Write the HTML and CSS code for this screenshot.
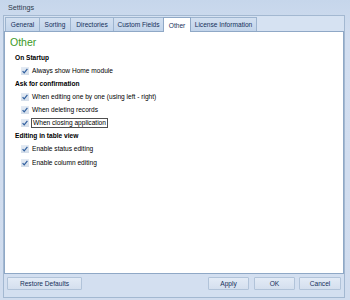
FILE: index.html
```html
<!DOCTYPE html>
<html>
<head>
<meta charset="utf-8">
<link rel="stylesheet" href="styles.css">
</head>
<body>
<div class="window">
  <div class="titlebar">Settings</div>
  <div class="frame">
    <div class="tabstrip">
      <div class="tab w-general">General</div>
      <div class="tab w-sorting">Sorting</div>
      <div class="tab w-dirs">Directories</div>
      <div class="tab w-custom">Custom Fields</div>
      <div class="tab active w-other">Other</div>
      <div class="tab w-license">License Information</div>
    </div>
    <div class="panel">
      <div class="title">Other</div>
      <div class="heading">On Startup</div>
      <div class="row"><span class="cb"><svg viewBox="0 0 8 8" width="8" height="8"><path d="M1.6 4.2 L3.2 5.9 L6.4 1.9" fill="none" stroke="#2f5e9e" stroke-width="1.2"/></svg></span><span class="lbl">Always show Home module</span></div>
      <div class="heading">Ask for confirmation</div>
      <div class="row"><span class="cb"><svg viewBox="0 0 8 8" width="8" height="8"><path d="M1.6 4.2 L3.2 5.9 L6.4 1.9" fill="none" stroke="#2f5e9e" stroke-width="1.2"/></svg></span><span class="lbl">When editing one by one (using left - right)</span></div>
      <div class="row"><span class="cb"><svg viewBox="0 0 8 8" width="8" height="8"><path d="M1.6 4.2 L3.2 5.9 L6.4 1.9" fill="none" stroke="#2f5e9e" stroke-width="1.2"/></svg></span><span class="lbl">When deleting records</span></div>
      <div class="row"><span class="cb"><svg viewBox="0 0 8 8" width="8" height="8"><path d="M1.6 4.2 L3.2 5.9 L6.4 1.9" fill="none" stroke="#2f5e9e" stroke-width="1.2"/></svg></span><span class="lbl focus">When closing application</span></div>
      <div class="heading">Editing in table view</div>
      <div class="row tall"><span class="cb"><svg viewBox="0 0 8 8" width="8" height="8"><path d="M1.6 4.2 L3.2 5.9 L6.4 1.9" fill="none" stroke="#2f5e9e" stroke-width="1.2"/></svg></span><span class="lbl">Enable status editing</span></div>
      <div class="row tall"><span class="cb"><svg viewBox="0 0 8 8" width="8" height="8"><path d="M1.6 4.2 L3.2 5.9 L6.4 1.9" fill="none" stroke="#2f5e9e" stroke-width="1.2"/></svg></span><span class="lbl">Enable column editing</span></div>
    </div>
    <div class="footer">
      <div class="btn w-restore">Restore Defaults</div>
      <div class="spacer"></div>
      <div class="btn w-apply">Apply</div>
      <div class="btn w-ok">OK</div>
      <div class="btn w-cancel">Cancel</div>
    </div>
  </div>
</div>
</body>
</html>
```
FILE: styles.css
```css
* { box-sizing: border-box; }
html, body { margin: 0; padding: 0; }
body {
  width: 350px;
  height: 300px;
  overflow: hidden;
  background: #cfdcee;
  font-family: "Liberation Sans", Arial, sans-serif;
  font-size: 6.6px;
  color: #000;
}
.window {
  width: 350px;
  height: 300px;
  padding: 0 5px 2px 3px;
  display: flex;
  flex-direction: column;
  background: linear-gradient(#c6d6eb, #d2def0 40px, #d0dcee);
}
.titlebar {
  height: 15px;
  line-height: 15px;
  padding-left: 5px;
  font-size: 7.2px;
  color: #2e3a4a;
}
.frame {
  flex: 1;
  display: flex;
  flex-direction: column;
  border: 1px solid #a3b8d1;
  background: #d3dff0;
}
.tabstrip {
  height: 15px;
  display: flex;
  align-items: flex-end;
  padding-left: 1px;
  background: #d6e2f2;
}
.tab {
  height: 14px;
  line-height: 13px;
  text-align: center;
  color: #15305a;
  background: linear-gradient(#d3e0f1, #c2d4ea);
  border: 1px solid #9db4cf;
  border-bottom: none;
  margin-right: -1px;
}
.tab.active {
  height: 15px;
  background: #ffffff;
  border-color: #8fa8c6;
  position: relative;
  z-index: 1;
  margin-bottom: -1px;
  line-height: 15px;
}
.w-general { width: 35px; }
.w-sorting { width: 32px; }
.w-dirs { width: 44px; }
.w-custom { width: 51px; }
.w-other { width: 28px; }
.w-license { width: 67px; }
.panel {
  height: 243px;
  background: #ffffff;
  border: 1px solid #8fa8c6;
  padding: 3px 0 0 5px;
}
.title {
  height: 16px;
  line-height: 15px;
  font-size: 10.5px;
  color: #3b9a27;
}
.heading {
  height: 13px;
  line-height: 13px;
  font-weight: bold;
  padding-left: 5px;
  color: #000;
}
.row {
  height: 13px;
  display: flex;
  align-items: center;
  padding-left: 11px;
}
.row.tall { height: 14px; }
.cb {
  width: 8px;
  height: 8px;
  display: flex;
  background: linear-gradient(#e4ebf4, #d3dde9);
  margin-right: 2px;
}
.cb svg { display: block; }
.lbl {
  line-height: 10px;
  padding: 0 1px;
  color: #000;
}
.lbl.focus { border: 1px solid #505050; padding: 0 1px; line-height: 8px; }
.footer {
  flex: 1;
  display: flex;
  align-items: flex-start;
  padding: 3px 3px 0 3px;
  gap: 5px;
}
.spacer { flex: 1; }
.btn {
  height: 13px;
  line-height: 12px;
  text-align: center;
  color: #15305a;
  border: 1px solid #b1c3d9;
  border-radius: 1px;
  background: linear-gradient(#e3ebf6, #d4dfee);
}
.w-restore { width: 75px; }
.w-apply { width: 41px; }
.w-ok { width: 41px; }
.w-cancel { width: 42px; margin-left: -1px; }
```
